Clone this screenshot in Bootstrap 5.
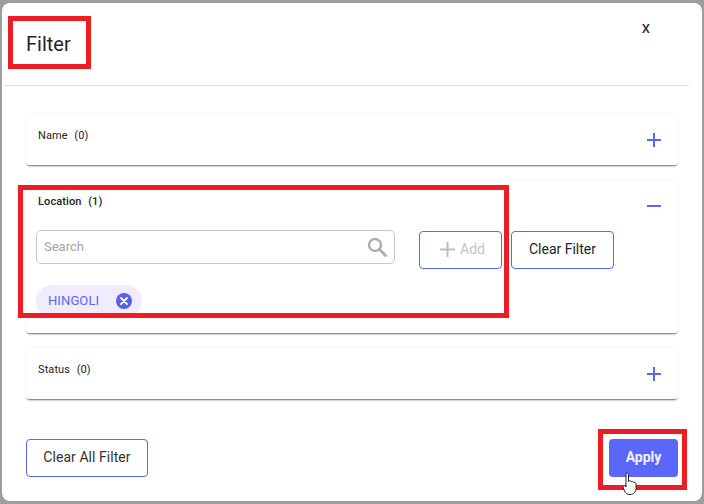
<!DOCTYPE html>
<html lang="en">
<head>
<meta charset="utf-8">
<title>Filter</title>
<link href="https://cdn.jsdelivr.net/npm/bootstrap@5.3.0/dist/css/bootstrap.min.css" rel="stylesheet">
<style>
html,body{height:504px;overflow:hidden}
body{background:#9e9e9e;font-family:Roboto,"Liberation Sans",sans-serif;color:#212529;padding:3px 2px 2px;position:relative}
.sheet{background:#fff;height:498px;width:700px;border-radius:8px;display:flex;flex-direction:column}
.sheet-head{height:83px;margin:0 13px 0 2px;border-bottom:1px solid #dedede;display:flex;justify-content:space-between;flex-shrink:0}
.sheet-title{font-size:20px;font-weight:400;margin:0;padding:29px 0 0 22px;line-height:24px}
.sheet-x{font-size:13px;font-weight:500;line-height:16px;padding:18px 39px 0 0;color:#333}
.sheet-body{padding:28px 24px 0;flex-grow:1}
.pane{background:#fff;border-radius:4px;box-shadow:0 2px 2px -1px rgba(0,0,0,.6),0 -1px 3px rgba(0,0,0,.04);margin-bottom:16px;position:relative}
.pane-closed{height:51px}
.pane-open{height:152px;margin-bottom:15px}
.pane-label{font-size:11px;line-height:13px;padding:15px 0 0 12px;letter-spacing:.1px;word-spacing:.5px;white-space:pre}
.pane-label.on{font-weight:500;padding-top:14px;letter-spacing:.1px}
.pane-icon{position:absolute;right:16px;top:18px;width:16px;height:16px;color:#5b67f8}
.pane-open .pane-icon{top:17px}
.tools{display:flex;align-items:flex-start;padding:23px 0 0 10px}
.finder{width:359px;height:34px;border:1px solid #c8c8c8;border-radius:5px;display:flex;align-items:center;justify-content:space-between;padding:0 7px 0 7px;font-size:13px;color:#a4a4a4;margin-top:-1px}
.add-btn,.clear-btn,.clear-all{background:#fff;border:1px solid #5b67f8;border-radius:4px;font-size:14px;font-weight:500;display:flex;align-items:center;justify-content:center;padding:0 0 2px}
.add-btn{width:83px;height:38px;margin-left:24px;color:#c3c3c3;gap:5px;font-weight:400;padding-left:4px}
.clear-btn{width:103px;height:38px;margin-left:9px;color:#212529;font-weight:400}
.chip-pill{display:inline-flex;align-items:center;background:#f0ebfd;color:#5b67f8;border-radius:16px;height:32px;margin:16px 0 0 10px;padding:0 10px 0 12px;font-size:13px;font-weight:400;gap:17px;letter-spacing:.1px}
.chip-x{width:16px;height:16px;flex-shrink:0}
.sheet-foot{display:flex;justify-content:space-between;padding:0 24px 24px}
.clear-all{width:122px;height:38px;color:#333;font-weight:400;letter-spacing:.05px}
.apply-btn{width:69px;height:38px;background:#5b67f8;color:#f2f2ff;border:0;border-radius:4px;font-size:14px;font-weight:700;padding:0 0 2px}
.ink-box{position:absolute;border:5px solid #ee1c25;pointer-events:none}
.ink-a{left:8px;top:16px;width:83px;height:53px}
.ink-b{left:18px;top:185px;width:491px;height:133px}
.ink-c{left:598px;top:429px;width:89px;height:61px}
.hand{position:absolute;left:622px;top:472px;width:18px;height:24px}
</style>
</head>
<body>
<div class="sheet">
  <div class="sheet-head">
    <h5 class="sheet-title">Filter</h5>
    <div class="sheet-x">X</div>
  </div>
  <div class="sheet-body">
    <div class="pane pane-closed">
      <div class="pane-label">Name  (0)</div>
      <svg class="pane-icon" viewBox="0 0 16 16"><path d="M1 8h14M8 1v14" stroke="currentColor" stroke-width="2" fill="none"/></svg>
    </div>
    <div class="pane pane-open">
      <div class="pane-label on">Location  (1)</div>
      <svg class="pane-icon" viewBox="0 0 16 16"><path d="M1 8h14" stroke="currentColor" stroke-width="2" fill="none"/></svg>
      <div class="tools">
        <div class="finder"><span>Search</span>
          <svg width="20" height="20" viewBox="0 0 20 20"><circle cx="8" cy="8" r="6" stroke="#adadad" stroke-width="2.4" fill="none"/><path d="M12.500 12.500l6 6" stroke="#adadad" stroke-width="2.800" stroke-linecap="round"/></svg>
        </div>
        <button class="add-btn" type="button">
          <svg width="15" height="15" viewBox="0 0 15 15"><path d="M0 7.500h15M7.500 0v15" stroke="#bdbdbd" stroke-width="2" fill="none"/></svg>Add
        </button>
        <button class="clear-btn" type="button">Clear Filter</button>
      </div>
      <div class="chip-pill">HINGOLI
        <svg class="chip-x" viewBox="0 0 16 16"><circle cx="8" cy="8" r="8" fill="#5660e8"/><path d="M5 5l6 6M11 5l-6 6" stroke="#fff" stroke-width="1.800" stroke-linecap="round"/></svg>
      </div>
    </div>
    <div class="pane pane-closed">
      <div class="pane-label">Status  (0)</div>
      <svg class="pane-icon" viewBox="0 0 16 16"><path d="M1 8h14M8 1v14" stroke="currentColor" stroke-width="2" fill="none"/></svg>
    </div>
  </div>
  <div class="sheet-foot">
    <button class="clear-all" type="button">Clear All Filter</button>
    <button class="apply-btn" type="button">Apply</button>
  </div>
</div>
<div class="ink-box ink-a"></div>
<div class="ink-box ink-b"></div>
<div class="ink-box ink-c"></div>
<svg class="hand" viewBox="0 0 18 24"><path d="M4 1.500c1-1 2.500-.5 2.500 1v7l1-.5c1-.3 2 0 2 1 .8-.6 2-.4 2.200.5.900-.5 2.200-.2 2.300 1v5c0 3-2 6-6 6-3 0-4.500-1.500-5.500-3.500L1 15c-.5-1 .8-2 1.800-1.200L4 15V2z" fill="#fff" stroke="#222" stroke-width="1"/></svg>
</body>
</html>
